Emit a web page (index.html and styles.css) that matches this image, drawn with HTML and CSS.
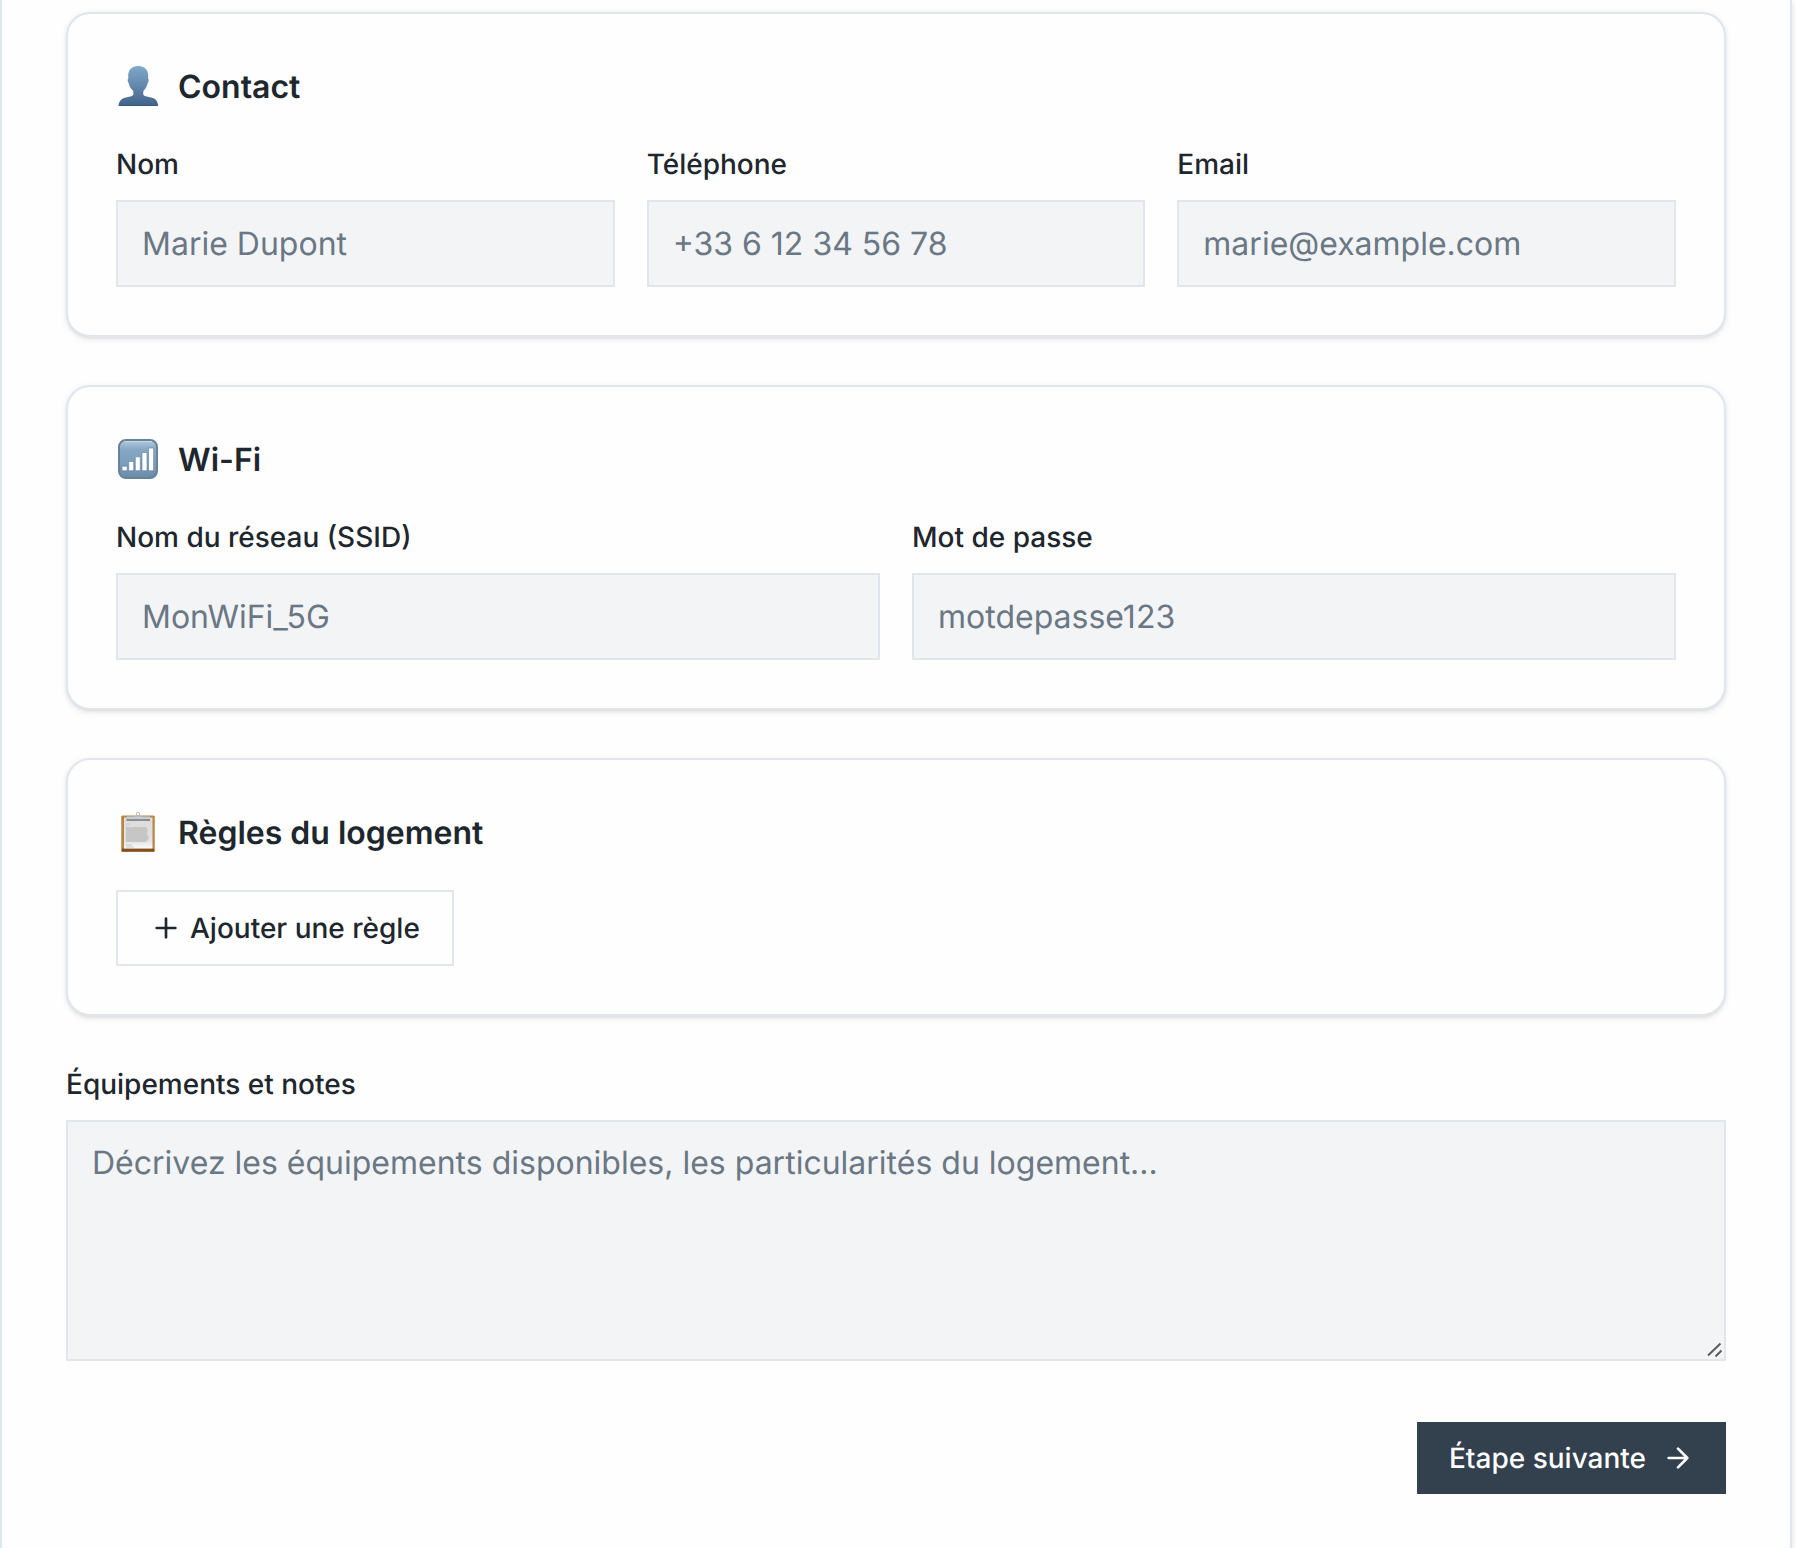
FILE: index.html
```html
<!DOCTYPE html>
<html lang="fr">
<head>
<meta charset="utf-8">
<meta name="viewport" content="width=device-width, initial-scale=1">
<title>Logement</title>
<link rel="stylesheet" href="styles.css">
</head>
<body>
<main class="panel">
  <form class="form">
    <section class="card">
      <h2 class="card-title">
        <svg class="emoji" viewBox="0 0 45 50" aria-hidden="true">
          <defs>
            <linearGradient id="person" x1="0" y1="0" x2="0" y2="1">
              <stop offset="0" stop-color="#7fa8c9"/>
              <stop offset=".5" stop-color="#6288ad"/>
              <stop offset="1" stop-color="#416288"/>
            </linearGradient>
          </defs>
          <path fill="url(#person)" d="M22.200 4C28.500 4 32.200 8 32.200 13.500L32.100 16.500C33.100 17 32.900 20 31.600 21.200C31 24.500 29.500 27 27.500 28.800L27.100 32C27.500 33.800 29.500 34.400 33 35C39 36 42 38.500 42 44H2.700C2.700 38.500 6 36 12 35C15.500 34.400 17.200 33.800 17.500 32L17.100 28.800C15 27 13.300 24.500 12.800 21.200C11.500 20 11.300 17 12.300 16.500L12.200 13.500C12.200 8 16 4 22.200 4Z"/>
          <path fill="#3a5a80" d="M2.700 43H42v1H2.700z"/>
        </svg>
        Contact
      </h2>
      <div class="fields">
        <div class="field">
          <label for="nom">Nom</label>
          <input id="nom" type="text" placeholder="Marie Dupont">
        </div>
        <div class="field">
          <label for="tel">Téléphone</label>
          <input id="tel" type="tel" placeholder="+33 6 12 34 56 78">
        </div>
        <div class="field">
          <label for="email">Email</label>
          <input id="email" type="email" placeholder="marie@example.com">
        </div>
      </div>
    </section>

    <section class="card">
      <h2 class="card-title">
        <svg class="emoji" viewBox="0 0 45 50" aria-hidden="true">
          <defs>
            <linearGradient id="signal" x1="0" y1="0" x2="0" y2="1">
              <stop offset="0" stop-color="#b4cbdd"/>
              <stop offset=".25" stop-color="#86a7c4"/>
              <stop offset=".6" stop-color="#7c9fbe"/>
              <stop offset="1" stop-color="#6b8ba8"/>
            </linearGradient>
          </defs>
          <rect x="3" y="5" width="38" height="38" rx="7" fill="url(#signal)" stroke="#67839a" stroke-width="2"/>
          <path fill="none" stroke="#c3d7e6" stroke-width="1" d="M8 6.500h28"/>
          <path fill="#fff" stroke="#5c7c9a" stroke-width=".6" d="M6 31.200h5.200V35.700H6zM12.700 26.400h5V35.700h-5zM19.300 21.800h5V35.700h-5zM26 17.500h5V35.700h-5zM32.600 13h5V35.700h-5z"/>
        </svg>
        Wi-Fi
      </h2>
      <div class="fields">
        <div class="field">
          <label for="ssid">Nom du réseau (SSID)</label>
          <input id="ssid" type="text" placeholder="MonWiFi_5G">
        </div>
        <div class="field">
          <label for="passe">Mot de passe</label>
          <input id="passe" type="text" placeholder="motdepasse123">
        </div>
      </div>
    </section>

    <section class="card">
      <h2 class="card-title">
        <svg class="emoji" viewBox="0 0 45 50" aria-hidden="true">
          <defs>
            <linearGradient id="paper" x1="0" y1="0" x2="0" y2="1">
              <stop offset="0" stop-color="#dcdcdc"/>
              <stop offset=".75" stop-color="#e2e2e2"/>
              <stop offset="1" stop-color="#fafafa"/>
            </linearGradient>
          </defs>
          <rect x="5" y="7.500" width="34" height="36.500" rx="1.500" fill="#b98544"/>
          <path fill="#7d5128" d="M6 40.500h32V43.500H6z"/>
          <path fill="#d0a468" d="M5 8h1v34H5zM38 8h1v34h-1z"/>
          <rect x="8" y="9.500" width="28.500" height="31" fill="url(#paper)"/>
          <path fill="#c6c6c6" d="M10 19h20l2 3-1 4 2 4-3 4H10z"/>
          <path fill="none" stroke="#c8c8c8" stroke-width="1" d="M10 16h4M10 37h6M10 39h8"/>
          <path fill="#8d8f91" d="M10.500 8.500h23.500v4.500H10.500z"/>
          <path fill="#c9cccf" d="M10.500 8.500h23.500v2.500H10.500z"/>
          <path fill="#a9c0d8" d="M17 9c2-.2 3-1.200 3.400-2.500h3.200c.4 1.300 1.400 2.300 3.400 2.500z"/>
          <circle cx="22" cy="6" r="1.700" fill="#fff" stroke="#b7bcc1"/>
        </svg>
        Règles du logement
      </h2>
      <button class="button button-outline" type="button">
        <svg class="icon" viewBox="0 0 24 24" aria-hidden="true"><path d="M5 12h14M12 5v14"/></svg>
        Ajouter une règle
      </button>
    </section>

    <div class="field">
      <label for="notes">Équipements et notes</label>
      <div class="textarea-wrap">
        <textarea id="notes" placeholder="Décrivez les équipements disponibles, les particularités du logement..."></textarea>
        <svg class="grip" viewBox="0 0 16 16" aria-hidden="true"><path d="M1 13.500L13.500 1.500M8.500 14.500L14.500 8.500"/></svg>
      </div>
    </div>

    <div class="actions">
      <button class="button button-primary" type="submit">
        Étape suivante
        <svg class="icon" viewBox="0 0 24 24" aria-hidden="true"><path d="M5 12h14M12 5l7 7-7 7"/></svg>
      </button>
    </div>
  </form>
</main>
</body>
</html>
```
FILE: styles.css
```css
:root {
  --text: #1e262e;
  --muted: #6a7784;
  --border: #e0e6ec;
  --field: #f3f4f6;
  --surface: #fefefe;
  --primary: #33404e;
  --shadow: 0 2px 6px rgba(0, 0, 0, .1), 0 2px 4px -2px rgba(0, 0, 0, .1);
}

* {
  box-sizing: border-box;
}

body {
  margin: 0;
  background: var(--surface);
  color: var(--text);
  font-family: Inter, "Liberation Sans", sans-serif;
  font-size: 32px;
  text-rendering: geometricPrecision;
}

.panel {
  min-height: 100vh;
  margin-right: 4px;
  padding: 12px 64px 54px;
  border: solid var(--border);
  border-width: 0 2px;
  background: var(--surface);
  box-shadow: var(--shadow);
}

.form {
  display: flex;
  flex-direction: column;
  gap: 48px;
}

.card {
  padding: 48px;
  border: 2px solid var(--border);
  border-radius: 24px;
  background: var(--surface);
  box-shadow: var(--shadow);
}

.card-title {
  display: flex;
  align-items: center;
  gap: 17px;
  margin: 0 0 32px;
  font-size: 32px;
  font-weight: 600;
  line-height: 50px;
}

.emoji {
  flex: none;
  width: 45px;
  height: 50px;
}

.fields {
  display: grid;
  grid-auto-flow: column;
  grid-auto-columns: minmax(0, 1fr);
  gap: 32px;
}

.field {
  display: flex;
  flex-direction: column;
  gap: 16px;
}

label {
  font-size: 28px;
  font-weight: 500;
  line-height: 40px;
}

input,
textarea {
  display: block;
  width: 100%;
  margin: 0;
  border: 2px solid var(--border);
  border-radius: 0;
  background: var(--field);
  color: var(--text);
  font: inherit;
  text-rendering: inherit;
}

input {
  height: 87px;
  padding: 0 24px;
}

textarea {
  height: 241px;
  padding: 16px 24px;
  line-height: 50px;
  resize: vertical;
}

textarea::-webkit-resizer {
  background: transparent;
}

::placeholder {
  color: var(--muted);
  opacity: 1;
}

.textarea-wrap {
  position: relative;
}

.grip {
  position: absolute;
  right: 3px;
  bottom: 3px;
  width: 16px;
  height: 16px;
  fill: none;
  stroke: #5c5c5c;
  stroke-width: 2;
  pointer-events: none;
}

.button {
  display: inline-flex;
  align-items: center;
  padding: 0 32px;
  border: 0;
  border-radius: 0;
  font: inherit;
  font-size: 28px;
  font-weight: 500;
  line-height: 40px;
  text-rendering: inherit;
  cursor: pointer;
}

.button-outline {
  display: flex;
  gap: 8px;
  height: 76px;
  border: 2px solid var(--border);
  background: var(--surface);
  color: var(--text);
}

.button-primary {
  gap: 16px;
  height: 72px;
  background: var(--primary);
  color: var(--surface);
}

.icon {
  flex: none;
  width: 32px;
  height: 32px;
  fill: none;
  stroke: currentColor;
  stroke-width: 2;
  stroke-linecap: round;
  stroke-linejoin: round;
}

.actions {
  display: flex;
  justify-content: flex-end;
  padding-top: 13px;
}
```
